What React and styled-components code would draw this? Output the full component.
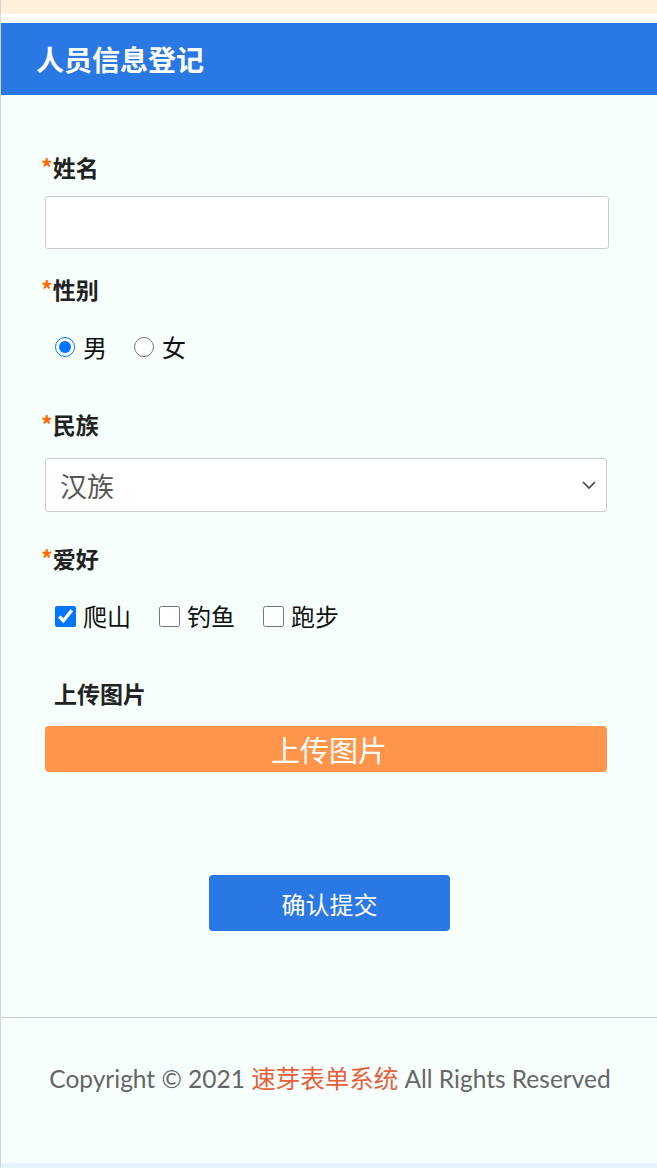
import React from 'react';
import styled, { createGlobalStyle } from 'styled-components';

const GlobalStyle = createGlobalStyle`
  html, body {
    margin: 0;
    padding: 0;
    background: #ffffff;
  }
  body {
    font-family: "Noto Sans", "Noto Sans CJK SC", sans-serif;
  }
`;

const Page = styled.div`
  width: 657px;
  min-height: 1168px;
  display: flex;
  flex-direction: column;
  border-left: 1px solid #d6d6d6;
  box-sizing: border-box;
`;

const Notice = styled.div`
  height: 14px;
  background: #fff0dc;
  margin-bottom: 9px;
`;

const Header = styled.header`
  height: 72px;
  background: #2a78e4;
  display: flex;
  align-items: center;
  padding-left: 35px;
  color: #fff;
  font-family: "Noto Sans CJK SC", sans-serif;
  font-size: 28px;
  font-weight: 700;
`;

const Main = styled.main`
  flex: 1;
  background: #f7fffd;
  display: flex;
  flex-direction: column;
`;

const Form = styled.form`
  display: flex;
  flex-direction: column;
  padding: 56px 49px 0 44px;
`;

const Label = styled.div`
  font-family: "Noto Sans CJK SC", sans-serif;
  font-size: 23px;
  font-weight: 700;
  color: #222;
  line-height: 32px;
  height: 32px;
  margin-left: ${({ $indent }) => $indent || -4}px;
  margin-top: ${({ $top }) => $top || 0}px;
`;

const Star = styled.span`
  color: #ff6a00;
  font-weight: 700;
`;

const TextInput = styled.input`
  margin-top: 13px;
  height: 53px;
  box-sizing: border-box;
  border: 1px solid #cccccc;
  border-radius: 3px;
  background: #fff;
  width: 564px;
`;

const ChoiceRow = styled.div`
  display: flex;
  align-items: center;
  height: 30px;
  margin-top: 27px;
  margin-left: 10px;
  gap: ${({ $gap }) => $gap}px;
`;

const Choice = styled.label`
  display: flex;
  align-items: center;
  gap: ${({ $inner }) => $inner}px;
  font-family: "Noto Sans CJK SC", sans-serif;
  font-size: 24px;
  color: #111;
  line-height: 30px;
`;

const Radio = styled.input.attrs({ type: 'radio' })`
  width: 20px;
  height: 20px;
  margin: 0;
`;

const Check = styled.input.attrs({ type: 'checkbox' })`
  width: 21px;
  height: 21px;
  margin: 0;
`;

const SelectBox = styled.div`
  margin-top: 18px;
  width: 562px;
  height: 54px;
  box-sizing: border-box;
  border: 1px solid #cccccc;
  border-radius: 3px;
  background: #fff;
  display: flex;
  align-items: center;
  justify-content: space-between;
  padding: 0 8px 0 14px;
  font-family: "Noto Sans CJK SC", sans-serif;
  font-size: 27px;
  color: #555;
`;

const UploadButton = styled.button`
  margin-top: 17px;
  width: 562px;
  height: 46px;
  border: none;
  border-radius: 4px;
  background: #ff944b;
  color: #fff;
  font-family: "Noto Sans CJK SC", sans-serif;
  font-size: 29px;
  line-height: 46px;
  padding: 0 0 0 6px;
`;

const Submit = styled.button`
  align-self: center;
  margin: 103px 0 0 6px;
  width: 241px;
  height: 56px;
  border: none;
  border-radius: 4px;
  background: #2a78e4;
  color: #fff;
  font-family: "Noto Sans CJK SC", sans-serif;
  font-size: 24px;
  padding: 0;
`;

const Divider = styled.hr`
  margin: 86px 0 0 0;
  border: none;
  border-top: 1px solid #cccccc;
`;

const Footer = styled.footer`
  flex: 1;
  display: flex;
  justify-content: center;
  padding-top: 45px;
  padding-left: 2px;
  font-family: "Lato", "Noto Sans CJK SC", sans-serif;
  font-size: 24.5px;
  color: #666;
  line-height: 32px;
`;

const Brand = styled.span`
  color: #e5603b;
`;

const BottomBar = styled.div`
  height: 5px;
  background: #e3f2fd;
`;

const Chevron = () => (
  <svg width="18" height="18" viewBox="0 0 18 18" fill="none">
    <path d="M3 6l6 6 6-6" stroke="#444" strokeWidth="1.6" />
  </svg>
);

export default function App() {
  return (
    <>
      <GlobalStyle />
      <Page>
        <Notice />
        <Header>人员信息登记</Header>
        <Main>
          <Form onSubmit={(e) => e.preventDefault()}>
            <Label><Star>*</Star>姓名</Label>
            <TextInput type="text" />

            <Label $top={24}><Star>*</Star>性别</Label>
            <ChoiceRow $gap={27}>
              <Choice $inner={8}><Radio name="sex" defaultChecked />男</Choice>
              <Choice $inner={8}><Radio name="sex" />女</Choice>
            </ChoiceRow>

            <Label $top={46}><Star>*</Star>民族</Label>
            <SelectBox>
              <span>汉族</span>
              <Chevron />
            </SelectBox>

            <Label $top={30}><Star>*</Star>爱好</Label>
            <ChoiceRow $gap={28}>
              <Choice $inner={7}><Check defaultChecked />爬山</Choice>
              <Choice $inner={7}><Check />钓鱼</Choice>
              <Choice $inner={7}><Check />跑步</Choice>
            </ChoiceRow>

            <Label $top={46} $indent={9}>上传图片</Label>
            <UploadButton type="button">上传图片</UploadButton>

            <Submit type="submit">确认提交</Submit>
          </Form>
          <Divider />
          <Footer>
            <span>Copyright © 2021 <Brand>速芽表单系统</Brand> All Rights Reserved</span>
          </Footer>
          <BottomBar />
        </Main>
      </Page>
    </>
  );
}
